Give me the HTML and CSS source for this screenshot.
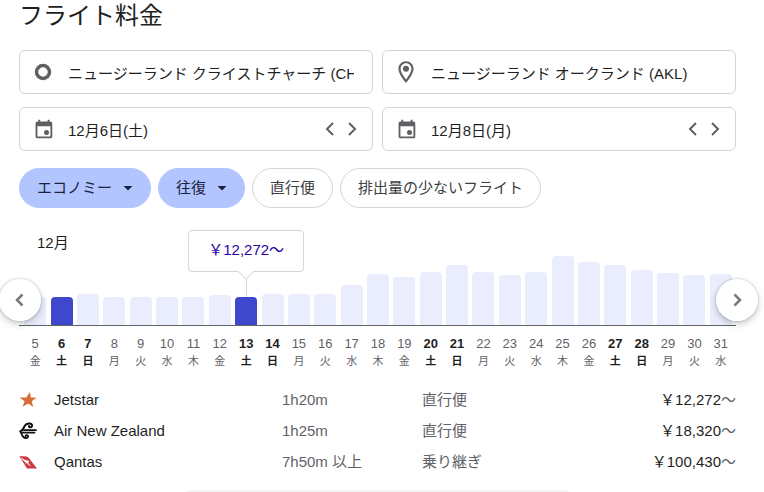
FILE: index.html
```html
<!DOCTYPE html>
<html lang="ja">
<head>
<meta charset="utf-8">
<title>フライト料金</title>
<link rel="stylesheet" href="styles.css">
</head>
<body>
<main class="page">
  <h1 class="title">フライト料金</h1>

  <form class="search">
    <label class="field">
      <svg class="field-icon" viewBox="0 0 24 24"><circle cx="12" cy="12" r="6" fill="none" stroke="currentColor" stroke-width="3.2"/></svg>
      <input class="field-input place" type="text" value="ニュージーランド クライストチャーチ (CHC)">
    </label>
    <label class="field">
      <svg class="field-icon" viewBox="0 0 24 24"><path fill="currentColor" d="M12 2C8.13 2 5 5.13 5 9c0 5.25 7 13 7 13s7-7.75 7-13c0-3.87-3.13-7-7-7zM7 9c0-2.76 2.24-5 5-5s5 2.24 5 5c0 2.88-2.88 7.19-5 9.88C9.92 16.21 7 11.85 7 9z"/><circle cx="12" cy="9" r="2.8" fill="currentColor"/></svg>
      <input class="field-input place" type="text" value="ニュージーランド オークランド (AKL)">
    </label>
    <div class="field">
      <svg class="field-icon" viewBox="-3 -3 28 28"><path fill="currentColor" fill-rule="evenodd" d="M16 1v2H8V1H6v2H5c-1.1 0-2 .9-2 2v14c0 1.1.9 2 2 2h14c1.1 0 2-.9 2-2V5c0-1.100-.9-2-2-2h-1V1h-2zm3 18H5V8h14v11z"/><circle cx="14.800" cy="14.800" r="2.700" fill="currentColor"/></svg>
      <input class="field-input" type="text" value="12月6日(土)">
      <button class="step" type="button"><svg viewBox="0 0 22 22"><path d="M14 5 8 11l6 6"/></svg></button>
      <button class="step" type="button"><svg viewBox="0 0 22 22"><path d="m8 5 6 6-6 6"/></svg></button>
    </div>
    <div class="field">
      <svg class="field-icon" viewBox="-3 -3 28 28"><path fill="currentColor" fill-rule="evenodd" d="M16 1v2H8V1H6v2H5c-1.1 0-2 .9-2 2v14c0 1.1.9 2 2 2h14c1.1 0 2-.9 2-2V5c0-1.100-.9-2-2-2h-1V1h-2zm3 18H5V8h14v11z"/><circle cx="14.800" cy="14.800" r="2.700" fill="currentColor"/></svg>
      <input class="field-input" type="text" value="12月8日(月)">
      <button class="step" type="button"><svg viewBox="0 0 22 22"><path d="M14 5 8 11l6 6"/></svg></button>
      <button class="step" type="button"><svg viewBox="0 0 22 22"><path d="m8 5 6 6-6 6"/></svg></button>
    </div>
  </form>

  <div class="chips">
    <button class="chip selected" type="button">エコノミー<svg class="caret" viewBox="0 0 20 20"><path d="M5.500 8h9L10 12.500z" fill="currentColor"/></svg></button>
    <button class="chip selected" type="button">往復<svg class="caret" viewBox="0 0 20 20"><path d="M5.500 8h9L10 12.500z" fill="currentColor"/></svg></button>
    <button class="chip" type="button">直行便</button>
    <button class="chip" type="button">排出量の少ないフライト</button>
  </div>

  <section class="chart">
    <h2 class="month">12月</h2>
    <div class="plot">
      <div class="bars">
        <div class="bar" style="height:28px"></div>
        <div class="bar active" style="height:28px"></div>
        <div class="bar" style="height:31px"></div>
        <div class="bar" style="height:28px"></div>
        <div class="bar" style="height:28px"></div>
        <div class="bar" style="height:28px"></div>
        <div class="bar" style="height:28px"></div>
        <div class="bar" style="height:30px"></div>
        <div class="bar active" style="height:28px">
          <div class="callout">
            <a class="callout-price" href="#">&#65509;12,272&#65374;</a>
            <svg class="callout-stem" viewBox="0 0 18 26"><path d="M1 -1h16v1L9 8 1 0z" fill="#fff"/><path d="M1 0 9 8l8-8M9.500 8V26" fill="none" stroke="#d2d4d7"/></svg>
          </div>
        </div>
        <div class="bar" style="height:31px"></div>
        <div class="bar" style="height:31px"></div>
        <div class="bar" style="height:31px"></div>
        <div class="bar" style="height:40px"></div>
        <div class="bar" style="height:51px"></div>
        <div class="bar" style="height:48px"></div>
        <div class="bar" style="height:53px"></div>
        <div class="bar" style="height:60px"></div>
        <div class="bar" style="height:53px"></div>
        <div class="bar" style="height:50px"></div>
        <div class="bar" style="height:53px"></div>
        <div class="bar" style="height:69px"></div>
        <div class="bar" style="height:63px"></div>
        <div class="bar" style="height:60px"></div>
        <div class="bar" style="height:55px"></div>
        <div class="bar" style="height:52px"></div>
        <div class="bar" style="height:50px"></div>
        <div class="bar" style="height:51px"></div>
      </div>
      <button class="pager prev" type="button"><svg viewBox="0 0 22 22"><path d="M13.500 5.500 8 11l5.500 5.500"/></svg></button>
      <button class="pager next" type="button"><svg viewBox="0 0 22 22"><path d="m8.500 5.500 5.500 5.500-5.500 5.500"/></svg></button>
    </div>
    <ol class="days">
      <li>5<span>金</span></li>
      <li class="weekend">6<span>土</span></li>
      <li class="weekend">7<span>日</span></li>
      <li>8<span>月</span></li>
      <li>9<span>火</span></li>
      <li>10<span>水</span></li>
      <li>11<span>木</span></li>
      <li>12<span>金</span></li>
      <li class="weekend">13<span>土</span></li>
      <li class="weekend">14<span>日</span></li>
      <li>15<span>月</span></li>
      <li>16<span>火</span></li>
      <li>17<span>水</span></li>
      <li>18<span>木</span></li>
      <li>19<span>金</span></li>
      <li class="weekend">20<span>土</span></li>
      <li class="weekend">21<span>日</span></li>
      <li>22<span>月</span></li>
      <li>23<span>火</span></li>
      <li>24<span>水</span></li>
      <li>25<span>木</span></li>
      <li>26<span>金</span></li>
      <li class="weekend">27<span>土</span></li>
      <li class="weekend">28<span>日</span></li>
      <li>29<span>月</span></li>
      <li>30<span>火</span></li>
      <li>31<span>水</span></li>
    </ol>
  </section>

  <table class="fares">
    <tbody>
      <tr>
        <td class="logo"><svg viewBox="0 0 18 18"><path fill="#d66f37" d="M10.800 1 11.900 6.600 17.600 6.800 12.700 10.300 14.300 16 9.300 12.600 3.600 15.800 5.600 10.200 .4 6.400 7.400 6.400z"/></svg></td>
        <td class="airline">Jetstar</td>
        <td class="duration">1h20m</td>
        <td class="stops">直行便</td>
        <td class="price">&#65509;12,272<span>&#65374;</span></td>
      </tr>
      <tr>
        <td class="logo"><svg viewBox="0 0 18 18"><g fill="none" stroke="#111" stroke-linecap="round"><path stroke-width="2" d="M1.200 9.400C3.600 8.800 4 7.600 5 5.200 6.200 2.300 8.200 1.300 10.600 1.400c2.600.1 3.300 2.700 1.500 3.700-1.200.6-2.400-.1-2.100-1.200"/><path stroke-width="1.800" d="M5 8.200h12M2 10.600h13.500"/><path stroke-width="1.800" d="M2.200 11c1 3.200 2.800 5.200 4.900 5.100 2.200-.1 2.600-2.600.9-3-1-.2-1.600.4-1.400 1.200"/></g></svg></td>
        <td class="airline">Air New Zealand</td>
        <td class="duration">1h25m</td>
        <td class="stops">直行便</td>
        <td class="price">&#65509;18,320<span>&#65374;</span></td>
      </tr>
      <tr>
        <td class="logo"><svg viewBox="0 0 18 18"><path fill="#cc3940" d="M.3 3.300H5.500C8 3.300 9.500 4.500 11 6.500L18 15.600H8z"/><path fill="#fff" d="M1.500 4.500C4 5.600 5.300 6.800 7 7.300L9 7.600l1.600 1.400-1.400.3c.4 1.500 1.600 2.900 3.600 4.200-2.500-.8-4.200-2-5-3.400l-1.700.6.600-1.500C5 8.300 3.200 6.600 1.500 4.500z"/></svg></td>
        <td class="airline">Qantas</td>
        <td class="duration">7h50m 以上</td>
        <td class="stops">乗り継ぎ</td>
        <td class="price">&#65509;100,430<span>&#65374;</span></td>
      </tr>
    </tbody>
  </table>

  <div class="more"></div>
</main>
</body>
</html>
```
FILE: styles.css
```css
* {
  box-sizing: border-box;
}

body {
  margin: 0;
  background: #fff;
  color: #1f1f1f;
  font: 15px/20px "Liberation Sans", "Noto Sans CJK JP", sans-serif;
}

button,
input {
  font: inherit;
  color: inherit;
}

button {
  padding: 0;
  border: 0;
  background: none;
  cursor: pointer;
}

.page {
  display: flex;
  flex-direction: column;
  height: 100vh;
  overflow: hidden;
  padding: 0 28px 0 19px;
}

.page > * {
  flex: none;
}

.title {
  margin: 0 0 18px;
  font-size: 24px;
  line-height: 32px;
  font-weight: 400;
}

.search {
  display: grid;
  grid-template-columns: 1fr 1fr;
  gap: 13px 9px;
}

.field {
  display: flex;
  align-items: center;
  min-width: 0;
  height: 44px;
  padding: 0 9px 0 10px;
  border: 1px solid #d2d4d7;
  border-radius: 6px;
}

.field-icon {
  flex: none;
  width: 26px;
  height: 26px;
  color: #5f6063;
}

.field-input {
  flex: 1;
  min-width: 0;
  height: 24px;
  margin: 1px 0 0 12px;
  padding: 0;
  border: 0;
  outline: 0;
  background: none;
}

.field-input.place {
  margin-right: 9px;
}

.step {
  display: flex;
}

.step svg,
.pager svg {
  width: 22px;
  height: 22px;
  fill: none;
  stroke: #5f6063;
  stroke-width: 2;
}

.chips {
  display: flex;
  gap: 7px;
  margin-top: 17px;
}

.chip {
  display: flex;
  align-items: center;
  gap: 6px;
  height: 40px;
  padding: 0 17px;
  border: 1px solid #d2d4d7;
  border-radius: 20px;
  color: #3c4043;
  white-space: nowrap;
}

.chip.selected {
  padding-right: 12px;
  border-color: #b2c5ff;
  background: #b2c5ff;
  color: #1b2341;
}

.caret {
  width: 20px;
  height: 20px;
}

.month {
  margin: 25px 0 0 18px;
  font-size: 15px;
  line-height: 20px;
  font-weight: 400;
}

.plot {
  position: relative;
  border-bottom: 1px solid #5f6368;
}

.bars,
.days {
  display: grid;
  grid-template-columns: repeat(27, 1fr);
  padding: 0 2px 0 3px;
}

.bars {
  align-items: end;
  justify-items: center;
  height: 72px;
}

.bar {
  position: relative;
  width: 22px;
  border-radius: 4px 4px 0 0;
  background: #e9edfd;
}

.bar.active {
  background: #3f47cc;
}

.callout {
  position: absolute;
  bottom: calc(100% + 25px);
  left: 50%;
  transform: translateX(-50%);
  padding: 9px 19px 11px;
  border: 1px solid #d2d4d7;
  border-radius: 4px;
  background: #fff;
  white-space: nowrap;
}

.callout-price {
  color: #2c00a5;
  text-decoration: none;
}

.callout-stem {
  position: absolute;
  top: 100%;
  left: 50%;
  width: 18px;
  height: 26px;
  margin-left: -9px;
  overflow: visible;
}

.pager {
  position: absolute;
  top: 26px;
  display: flex;
  align-items: center;
  justify-content: center;
  width: 42px;
  height: 42px;
  border-radius: 50%;
  background: rgba(255, 255, 255, 0.9);
  box-shadow: 0 0 2px rgba(0, 0, 0, 0.3), 0 3px 7px rgba(0, 0, 0, 0.22);
}

.pager svg {
  stroke: #77797d;
  stroke-width: 2.5;
}

.prev {
  left: -20px;
}

.next {
  right: -22px;
}

.days {
  margin: 9px 0 0;
  list-style: none;
  color: #5f6368;
  font-size: 13px;
  line-height: 18px;
  text-align: center;
}

.days span {
  display: block;
  font-size: 11px;
  line-height: 16px;
}

.weekend {
  color: #1f1f1f;
  font-weight: 700;
}

.fares {
  width: 100%;
  margin-top: 15px;
  border-collapse: collapse;
  table-layout: fixed;
}

.fares td {
  height: 31px;
  padding: 0;
}

.logo {
  width: 35px;
}

.logo svg {
  display: block;
  width: 18px;
  height: 18px;
}

.duration {
  width: 140px;
}

.stops {
  width: 157px;
}

.duration,
.stops,
.price span {
  color: #5f6368;
}

.price {
  width: 157px;
  text-align: right;
}

.more {
  width: 57%;
  height: 40px;
  margin: 13px auto 0;
  border-radius: 20px;
  background: #f1f2f3;
}
```
